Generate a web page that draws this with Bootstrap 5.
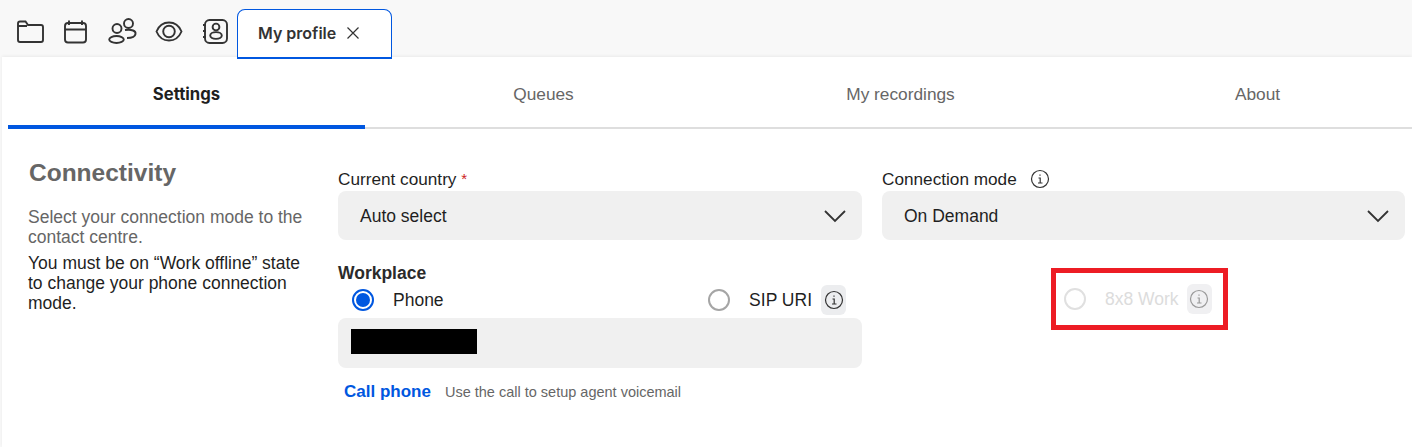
<!DOCTYPE html>
<html lang="en"><head><meta charset="utf-8">
<link href="https://cdn.jsdelivr.net/npm/bootstrap@5.3.0/dist/css/bootstrap.min.css" rel="stylesheet">
<style>
html,body{height:447px;overflow:hidden}
body{background:#f8f8f8;font-family:"Liberation Sans",Arial,sans-serif;color:#1f1f1f;font-size:17.5px}
.topstrip{height:57px;background:#f8f8f8;padding-left:8px}
.iconbtn{width:46px;height:46px;margin-top:9px;color:#333}
.iconbtn svg{display:block;fill:none;stroke:currentColor;stroke-width:1.9}
.tabbox{margin-top:9px;margin-left:-1px;width:155px;height:50px;flex:none;background:#fff;border:1px solid #0057e0;border-bottom-width:2px;border-radius:8px 8px 0 0;padding:0 0 2px 20px;font-family:Inter,sans-serif;font-weight:600;font-size:16px;color:#333;position:relative;z-index:1}
.closeglyph{margin-left:10px}
.mainpane{margin-left:2px;background:#fff;height:390px;box-shadow:0 -1px 3px rgba(0,0,0,.06);overflow:hidden}
.tabrow{margin-left:6px;height:72px;border-bottom:2px solid #dedede;width:1428px}
.tabcell{flex:0 0 357px;padding-top:26px;text-align:center;color:#666;font-size:17.3px;line-height:22px;height:72px}
.tabcell.sel{font-family:Inter,"Liberation Sans",sans-serif;font-weight:700;font-size:16.7px;color:#1f1f1f;border-bottom:4px solid #0057e0;margin-bottom:-2px}
.bodygrid{padding-top:29px}
.leftcol{width:336px;padding-left:26px;padding-right:28px;flex:none}
.headline{font-size:24.5px;font-weight:700;color:#666;line-height:30px;margin:0 0 19px 1px}
.descr{font-size:17.5px;line-height:20px;margin:0 0 6px}
.descr.dim{color:#666}
.centercol{width:524px;flex:none}
.rightcol{width:523px;flex:none;margin-left:20px}
.fieldlabel{font-size:17.2px;line-height:22px;height:23px;margin-top:10px}
.fieldlabel.withhint{margin-top:9px;height:24px}
.req{color:#c22;font-size:15px;vertical-align:1px}
.selectish{height:49px;background:#f0f0f0;border-radius:8px;padding:0 15px 0 22px;font-size:17.5px}
.selecttext{margin-top:2px}
.wlabel{font-weight:700;font-size:17.5px;line-height:22px;margin-top:22px;color:#2b2b2b}
.radiorow{height:32px}
.phonegroup{margin-left:14px}
.phonelabel{margin-left:19px}
.radioring{width:22px;height:22px;border-radius:50%;border:2px solid #a5a5a5;flex:none;background:#fff}
.radioring.on{border-color:#0057e0;display:flex;align-items:center;justify-content:center}
.radioring.on::after{content:"";width:14px;height:14px;border-radius:50%;background:#0057e0}
.riglabel{margin-left:19px;margin-right:9px}
.infochip{width:25px;height:30px;border-radius:6px;background:#ecedef;color:#333;margin-right:16px}
.phonebox{height:50px;background:#f0f0f0;border-radius:8px;margin-top:2px;padding:11px 0 0 13px}
.redact{width:126px;height:25px;background:#000}
.callrow{margin-top:11px}
.calllink{color:#0057e0;font-weight:700;font-size:17px;text-decoration:none;margin-left:6px}
.callhint{font-size:14.5px;color:#666;margin-left:14px;margin-top:2px}
.outlined{width:177px;height:62px;border:5px solid #ed1c24;margin-left:169px;margin-top:28px;padding-left:8px;color:#dcdcdc;flex:none}
.outlined .radioring{border-color:#e0e0e0}
.outlined .riglabel{margin-right:8px}
.outlined .infochip{color:#999;background:#f0f0f2;margin-right:0}
.hintglyph{margin-left:13px}
</style></head><body>
<div class="topstrip d-flex">
 <div class="iconbtn"><svg width="46" height="46" viewBox="8 9 46 46"><path d="M18 23.500a2 2 0 0 1 2-2h5.500l2.500 3.500H41a2 2 0 0 1 2 2V40a2 2 0 0 1-2 2H20a2 2 0 0 1-2-2zM18 26h9"/></svg></div>
 <div class="iconbtn"><svg width="46" height="46" viewBox="54 9 46 46"><rect x="65" y="23" width="21" height="19.500" rx="3"/><path d="M65 29.500h21M69 20.500V25M82 20.500V25"/></svg></div>
 <div class="iconbtn"><svg width="46" height="46" viewBox="100 9 46 46"><circle cx="117" cy="28.500" r="4.500"/><ellipse cx="116.500" cy="39.500" rx="7.300" ry="3.500"/><circle cx="128.500" cy="23.500" r="4.500"/><path d="M125 30C132 29 136 31 135.500 34C135 37 131 38 127 38"/></svg></div>
 <div class="iconbtn"><svg width="46" height="46" viewBox="146 9 46 46"><path d="M156.500 31.500C159 25.500 163.500 22.500 169 22.500s10 3 12.500 9C179 37.500 174.500 40.500 169 40.500S159 37.500 156.500 31.500z"/><circle cx="169" cy="31.500" r="5.800"/></svg></div>
 <div class="iconbtn"><svg width="46" height="46" viewBox="192 9 46 46"><rect x="205" y="20" width="22" height="23" rx="4.500"/><circle cx="216" cy="27" r="3.400"/><ellipse cx="216" cy="35.500" rx="5.800" ry="3.400"/><path d="M203 25h3M203 31h3M203 37h3"/></svg></div>
 <div class="tabbox d-flex align-items-center"><span>My profile</span><svg class="closeglyph" width="14" height="14" viewBox="0 0 14 14" fill="none" stroke="#333" stroke-width="1.200"><path d="M1.500 1.500l11 11M12.500 1.500l-11 11"/></svg></div>
</div>
<div class="mainpane">
 <div class="tabrow d-flex">
  <div class="tabcell sel">Settings</div><div class="tabcell">Queues</div><div class="tabcell">My recordings</div><div class="tabcell">About</div>
 </div>
 <div class="bodygrid d-flex">
  <div class="leftcol">
   <h2 class="headline">Connectivity</h2>
   <p class="descr dim">Select your connection mode to the contact centre.</p>
   <p class="descr">You must be on “Work offline” state to change your phone connection mode.</p>
  </div>
  <div class="centercol">
   <div class="fieldlabel">Current country <span class="req">*</span></div>
   <div class="selectish d-flex align-items-center justify-content-between"><span class="selecttext">Auto select</span><svg width="24" height="14" viewBox="0 0 24 14" fill="none" stroke="#333" stroke-width="1.800"><path d="M2 2l10 10L22 2"/></svg></div>
   <div class="wlabel">Workplace</div>
   <div class="radiorow d-flex align-items-center">
    <div class="d-flex align-items-center phonegroup me-auto"><span class="radioring on"></span><span class="phonelabel">Phone</span></div>
    <div class="d-flex align-items-center"><span class="radioring"></span><span class="riglabel">SIP URI</span><span class="infochip d-flex align-items-center justify-content-center"><svg width="20" height="20" viewBox="0 0 20 20" fill="none" stroke="currentColor" stroke-width="1.200"><circle cx="10" cy="10" r="8.500"/><path d="M8.500 9h1.700v5M8 14h4.500M10 5.500v1.200"/></svg></span></div>
   </div>
   <div class="phonebox"><div class="redact"></div></div>
   <div class="d-flex align-items-center callrow"><a class="calllink" href="#">Call phone</a><span class="callhint">Use the call to setup agent voicemail</span></div>
  </div>
  <div class="rightcol">
   <div class="fieldlabel withhint d-flex align-items-center">Connection mode<svg class="hintglyph" width="20" height="20" viewBox="0 0 20 20" fill="none" stroke="#333" stroke-width="1.200"><circle cx="10" cy="10" r="8.500"/><path d="M8.500 9h1.700v5M8 14h4.500M10 5.500v1.200"/></svg></div>
   <div class="selectish d-flex align-items-center justify-content-between"><span class="selecttext">On Demand</span><svg width="24" height="14" viewBox="0 0 24 14" fill="none" stroke="#333" stroke-width="1.800"><path d="M2 2l10 10L22 2"/></svg></div>
   <div class="outlined d-flex align-items-center"><span class="radioring"></span><span class="riglabel">8x8 Work</span><span class="infochip d-flex align-items-center justify-content-center"><svg width="20" height="20" viewBox="0 0 20 20" fill="none" stroke="currentColor" stroke-width="1.200"><circle cx="10" cy="10" r="8.500"/><path d="M8.500 9h1.700v5M8 14h4.500M10 5.500v1.200"/></svg></span></div>
  </div>
 </div>
</div>
<script src="https://cdn.jsdelivr.net/npm/bootstrap@5.3.0/dist/js/bootstrap.bundle.min.js"></script>
</body></html>
